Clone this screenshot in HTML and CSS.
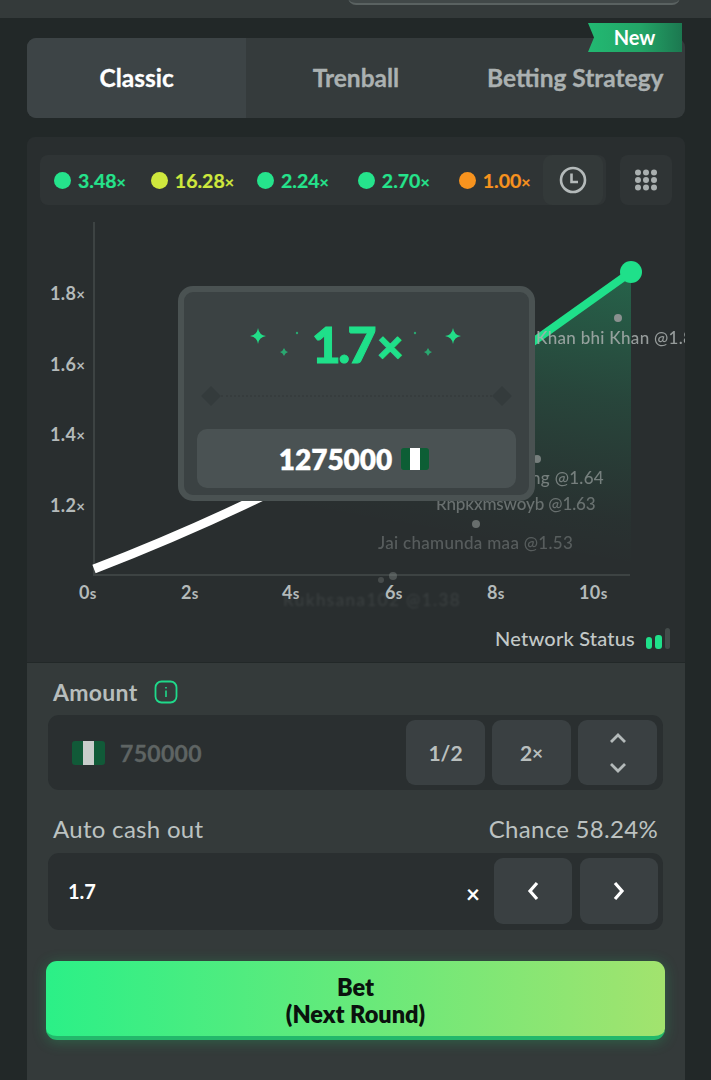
FILE: index.html
```html
<!DOCTYPE html>
<html lang="en">
<head>
<meta charset="utf-8">
<title>Crash</title>
<link rel="stylesheet" href="styles.css">
</head>
<body>
<div class="topbar"><div class="toppill"></div></div>
<main class="page">
  <nav class="tabs">
    <div class="tab active">Classic</div>
    <div class="tab">Trenball</div>
    <div class="tab">Betting Strategy</div>
    <div class="ribbon"><svg class="ribbon-bg" viewBox="0 0 95 29" preserveAspectRatio="none"><defs><linearGradient id="rib" x1="0" x2="1" y1="0" y2="0"><stop offset="0" stop-color="#22b972"/><stop offset=".55" stop-color="#23a567"/><stop offset="1" stop-color="#1c7850"/></linearGradient></defs><path d="M1 0H95V29H1L7 14.5Z" fill="url(#rib)"/></svg><span class="ribbon-text">New</span></div>
  </nav>
  <section class="game">
    <div class="history">
      <div class="results">
        <div class="res green"><i></i><span>3.48<small>×</small></span></div>
        <div class="res lime"><i></i><span>16.28<small>×</small></span></div>
        <div class="res green wide"><i></i><span>2.24<small>×</small></span></div>
        <div class="res green wide"><i></i><span>2.70<small>×</small></span></div>
        <div class="res orange"><i></i><span>1.00<small>×</small></span></div>
      </div>
      <div class="clock"><svg viewBox="0 0 28 28" width="28" height="28"><circle cx="14" cy="14" r="12" fill="none" stroke="#b4baba" stroke-width="2.6"/><path d="M12.5 7.5V16H19" fill="none" stroke="#b4baba" stroke-width="2.6"/></svg></div>
      <div class="gridbtn"><svg viewBox="0 0 24 22" width="24" height="22" fill="#a9afaf"><circle cx="4" cy="3.5" r="3"/><circle cx="12" cy="3.5" r="3"/><circle cx="20" cy="3.5" r="3"/><circle cx="4" cy="11" r="3"/><circle cx="12" cy="11" r="3"/><circle cx="20" cy="11" r="3"/><circle cx="4" cy="18.5" r="3"/><circle cx="12" cy="18.5" r="3"/><circle cx="20" cy="18.5" r="3"/></svg></div>
    </div>
    <svg class="chart" viewBox="27 137 658 525" width="658" height="525">
      <defs>
        <linearGradient id="area" gradientUnits="userSpaceOnUse" x1="640" y1="272" x2="590" y2="560"><stop offset="0" stop-color="#1fe08a" stop-opacity=".3"/><stop offset=".45" stop-color="#1fe08a" stop-opacity=".13"/><stop offset=".85" stop-color="#1fe08a" stop-opacity=".02"/><stop offset="1" stop-color="#1fe08a" stop-opacity="0"/></linearGradient>
        <filter id="soft"><feGaussianBlur stdDeviation="1.3"/></filter>
      </defs>
      <path d="M94 568Q180 535 265 495L535 340L631 272V575H94Z" fill="url(#area)"/>
      <path d="M94 222V575H630" fill="none" stroke="#3d4343" stroke-width="2"/>
      <g class="axis-y"><text x="50" y="300">1.8<tspan class="mini">×</tspan></text><text x="50" y="371">1.6<tspan class="mini">×</tspan></text><text x="50" y="441">1.4<tspan class="mini">×</tspan></text><text x="50" y="512">1.2<tspan class="mini">×</tspan></text></g>
      <g class="axis-x"><text x="79" y="599">0<tspan class="mini">s</tspan></text><text x="181" y="599">2<tspan class="mini">s</tspan></text><text x="282" y="599">4<tspan class="mini">s</tspan></text><text x="385" y="599">6<tspan class="mini">s</tspan></text><text x="487" y="599">8<tspan class="mini">s</tspan></text><text x="579" y="599">10<tspan class="mini">s</tspan></text></g>
      <path d="M94 569Q180 536 265 495" fill="none" stroke="#fff" stroke-width="9"/>
      <path d="M530 344L631 272" fill="none" stroke="#1fe08a" stroke-width="8"/>
      <circle cx="631" cy="272" r="11" fill="#1fe08a"/>
      <g fill="#8a908f"><circle cx="618" cy="318" r="4"/><circle cx="537" cy="459" r="4" opacity=".8"/><circle cx="476" cy="524" r="4" opacity=".65"/><circle cx="393" cy="576" r="4" opacity=".4"/><circle cx="381" cy="580" r="3" opacity=".3"/></g>
      <g class="players">
        <text x="536" y="344" opacity=".85">Khan bhi Khan @1.8</text>
        <text x="604" y="484" text-anchor="end" opacity=".6">Sing @1.64</text>
        <text x="436" y="510" opacity=".5" textLength="160">Rnpkxmswoyb @1.63</text>
        <text x="378" y="549" opacity=".36">Jai chamunda maa @1.53</text>
        <text x="283" y="606" opacity=".13" filter="url(#soft)" textLength="177">Rukhsana102 @1.38</text>
      </g>
    </svg>
    <div class="popup">
      <div class="pop-mult">1.7<small>×</small></div>
      <svg class="sparkles" viewBox="0 0 212 30" width="212" height="30" fill="#22dd88">
        <path d="M8 1Q9 8 16 9Q9 10 8 17Q7 10 0 9Q7 8 8 1Z"/><path d="M203 1Q204 8 211 9Q204 10 203 17Q202 10 195 9Q202 8 203 1Z"/>
        <path class="dim" d="M34 21Q35 24 38 25Q35 26 34 29Q33 26 30 25Q33 24 34 21Z"/><path class="dim" d="M178 21Q179 24 182 25Q179 26 178 29Q177 26 174 25Q177 24 178 21Z"/>
        <circle class="dim" cx="47" cy="6" r="1.2"/><circle class="dim" cx="165" cy="6" r="1.2"/>
      </svg>
      <div class="pop-line"><i></i><b></b><i></i></div>
      <div class="pop-win"><span>1275000</span><span class="flag small"><i></i></span></div>
    </div>
    <div class="network"><span>Network Status</span><div class="bars"><i class="b1"></i><i class="b2"></i><i class="b3"></i></div></div>
  </section>
  <section class="controls">
    <div class="label-row first"><span class="label strong">Amount</span><svg class="info" viewBox="0 0 24 24" width="24" height="24"><rect x="1.5" y="1.5" width="21" height="21" rx="6" fill="none" stroke="#1fd98a" stroke-width="1.8"/><path d="M12 7v1.5M12 10.5V17" stroke="#1fd98a" stroke-width="1.6"/></svg></div>
    <div class="field amount">
      <span class="flag dimmed"><i></i></span>
      <span class="value muted">750000</span>
      <div class="btns">
        <div class="btn">1/2</div>
        <div class="btn">2<small>×</small></div>
        <div class="btn"><svg viewBox="0 0 20 44" width="20" height="44" fill="none" stroke="#b4baba" stroke-width="2.8"><path d="M3 11L10 4L17 11M3 33L10 40L17 33"/></svg></div>
      </div>
    </div>
    <div class="label-row second"><span class="label">Auto cash out</span><span class="label">Chance 58.24%</span></div>
    <div class="field cash">
      <span class="value white">1.7</span>
      <span class="suffix">×</span>
      <div class="btns">
        <div class="btn tall"><svg viewBox="0 0 16 22" width="16" height="22" fill="none" stroke="#fff" stroke-width="3.2"><path d="M12 3L5 11L12 19"/></svg></div>
        <div class="btn tall"><svg viewBox="0 0 16 22" width="16" height="22" fill="none" stroke="#fff" stroke-width="3.2"><path d="M4 3L11 11L4 19"/></svg></div>
      </div>
    </div>
    <button class="bet" type="button">Bet<br>(Next Round)</button>
  </section>
</main>
</body>
</html>
```

FILE: styles.css
```css
* { box-sizing: border-box; }
html, body { margin: 0; height: 1080px; overflow: hidden; }
body { background: #222828; font-family: "Lato", "Liberation Sans", sans-serif; color: #fff; }

.topbar { height: 18px; background: #343a3a; position: relative; }
.toppill { position: absolute; left: 348px; right: 31px; top: -6px; height: 11px; background: #414848; border-bottom: 2px solid #5a6261; border-radius: 0 0 8px 8px; }

.page { padding: 20px 26px 0 27px; }

.tabs { position: relative; display: flex; height: 80px; background: #353b3c; border-radius: 9px; }
.tab { flex: 1; display: flex; align-items: center; justify-content: center; padding-bottom: 2px; font-size: 24.5px; font-weight: 700; color: #abb1b1; white-space: nowrap; -webkit-text-stroke: .3px currentColor; }
.tab.active { color: #fff; background: #3d4446; border-radius: 9px 0 0 9px; }
.ribbon { position: absolute; right: 3px; top: -15px; width: 95px; height: 29px; display: flex; align-items: center; justify-content: center; }
.ribbon-bg { position: absolute; inset: 0; width: 100%; height: 100%; }
.ribbon-text { position: relative; top: -1px; font-size: 20px; font-weight: 700; }

.game { position: relative; margin-top: 19px; height: 525px; background: #292e2f; border-radius: 8px 8px 0 0; }
.history { position: relative; z-index: 1; display: flex; align-items: center; height: 50px; top: 18px; left: 13px; width: 632px; }
.results { display: flex; align-items: center; height: 50px; width: 566px; padding-left: 14px; gap: 25px; background: #2f3435; border-radius: 8px; }
.res { display: flex; align-items: center; gap: 7px; font-size: 19.5px; font-weight: 700; -webkit-text-stroke: .2px currentColor; }
.res.lime { margin-right: -2px; }
.res.wide { margin-right: 4px; }
.res i { width: 17px; height: 17px; border-radius: 50%; background: currentColor; }
.res small { font-size: 16px; }
.green { color: #25e38c; }
.lime { color: #cfe83d; }
.orange { color: #f7931e; }
.clock { width: 60px; height: 50px; margin-left: -63px; display: flex; align-items: center; justify-content: center; background: #333939; border-radius: 9px; }
.gridbtn { width: 52px; height: 50px; margin-left: 17px; display: flex; align-items: center; justify-content: center; background: #2f3435; border-radius: 8px; }

.chart { position: absolute; left: 0; top: 0; overflow: hidden; }
.chart text { font-family: "Lato", "Liberation Sans", sans-serif; }
.axis-y text, .axis-x text { font-size: 18px; font-weight: 700; fill: #b4baba; letter-spacing: .4px; }
.mini { font-size: 15px; }
.players text { font-size: 17px; font-weight: 500; fill: #a9afae; letter-spacing: .3px; }

.popup { position: absolute; left: 151px; top: 149px; width: 357px; height: 215px; padding: 0 13px; background: #3b4243; border: 6px solid #4a5252; border-radius: 15px; }
.pop-mult { margin-top: 25px; height: 54px; text-align: center; color: #1fe08a; font-size: 50px; line-height: 54px; font-weight: 900; letter-spacing: -2.5px; -webkit-text-stroke: 1px #1fe08a; }
.pop-mult small { font-size: 46px; margin-left: 3px; }
.sparkles { position: absolute; left: 66px; top: 35px; }
.sparkles .dim { opacity: .65; }
.pop-line { display: flex; align-items: center; margin-top: 15px; padding: 0 4px; opacity: .4; }
.pop-line i { width: 20px; height: 20px; background: #2b3132; transform: rotate(45deg) scale(.7); }
.pop-line b { flex: 1; border-top: 2px dotted #2f3536; }
.pop-win { margin: 23px 0 0; height: 59px; padding-right: 5px; background: #4a5253; border-radius: 10px; display: flex; align-items: center; justify-content: center; gap: 9px; font-size: 28px; font-weight: 800; -webkit-text-stroke: .3px #fff; }

.flag { display: block; width: 33px; height: 24px; background: #0b6b3c; border-radius: 3px; position: relative; }
.flag i { position: absolute; left: 11px; top: 0; width: 11px; height: 100%; background: #c9cdcb; }
.flag.small { width: 28px; height: 22px; background: #0d5e35; }
.flag.small i { left: 9px; width: 10px; background: #fff; }
.flag.dimmed { background: #115a38; }

.network { position: absolute; right: 15px; top: 489px; display: flex; align-items: center; gap: 11px; font-size: 20px; color: #c3c9c8; font-weight: 500; letter-spacing: .2px; }
.bars { display: flex; align-items: flex-end; gap: 3px; }
.bars i { display: block; border-radius: 3px; }
.b1 { width: 6px; height: 12px; background: #1fe08a; }
.b2 { width: 7px; height: 14px; background: #1fe08a; }
.b3 { width: 5px; height: 21px; background: #434b4a; }

.controls { margin-top: 1px; height: 420px; padding: 0 22px 0 21px; background: #343a3a; }
.label-row { display: flex; align-items: center; }
.label-row.first { height: 30px; padding: 14px 0 0 5px; gap: 16px; box-sizing: content-box; }
.label-row.second { justify-content: space-between; margin-top: 23px; height: 30px; padding: 0 5px; }
.label { font-size: 24px; color: #bcc2c1; letter-spacing: .3px; }
.label.strong { font-size: 23px; font-weight: 700; color: #b7bdbc; letter-spacing: .3px; }
.field { display: flex; align-items: center; background: #2a2f30; border-radius: 11px; }
.field.amount { height: 75px; margin-top: 8px; padding: 0 6px 0 24px; }
.field.cash { height: 77px; margin-top: 10px; padding: 0 5px 2px 20px; }
.value { font-weight: 700; }
.muted { margin-left: 15px; font-size: 23px; color: #5e6463; letter-spacing: .3px; -webkit-text-stroke: .3px #5e6463; }
.white { font-size: 20px; color: #fff; }
.suffix { margin-left: auto; margin-right: 14px; font-size: 24px; font-weight: 700; line-height: 1; position: relative; top: 3px; }
.btns { display: flex; gap: 7px; }
.amount .btns { margin-left: auto; }
.btn { width: 79px; height: 65px; display: flex; align-items: center; justify-content: center; background: #3a4042; border-radius: 9px; font-size: 21px; font-weight: 700; color: #b9bfbe; }
.btn small { font-size: 19px; }
.cash .btns { gap: 8px; }
.btn.tall { width: 78px; height: 66px; }

.bet { display: block; width: 619px; height: 79px; margin: 31px 0 0 -2px; padding-top: 5px; border: 0; border-bottom: 4px solid #23b86b; border-radius: 11px; background: linear-gradient(90deg, #2bf087, #a2e36e); box-shadow: 0 2px 14px rgba(35, 200, 110, .3); font-family: inherit; font-size: 23.5px; line-height: 27px; font-weight: 800; color: #0a120d; }
```
